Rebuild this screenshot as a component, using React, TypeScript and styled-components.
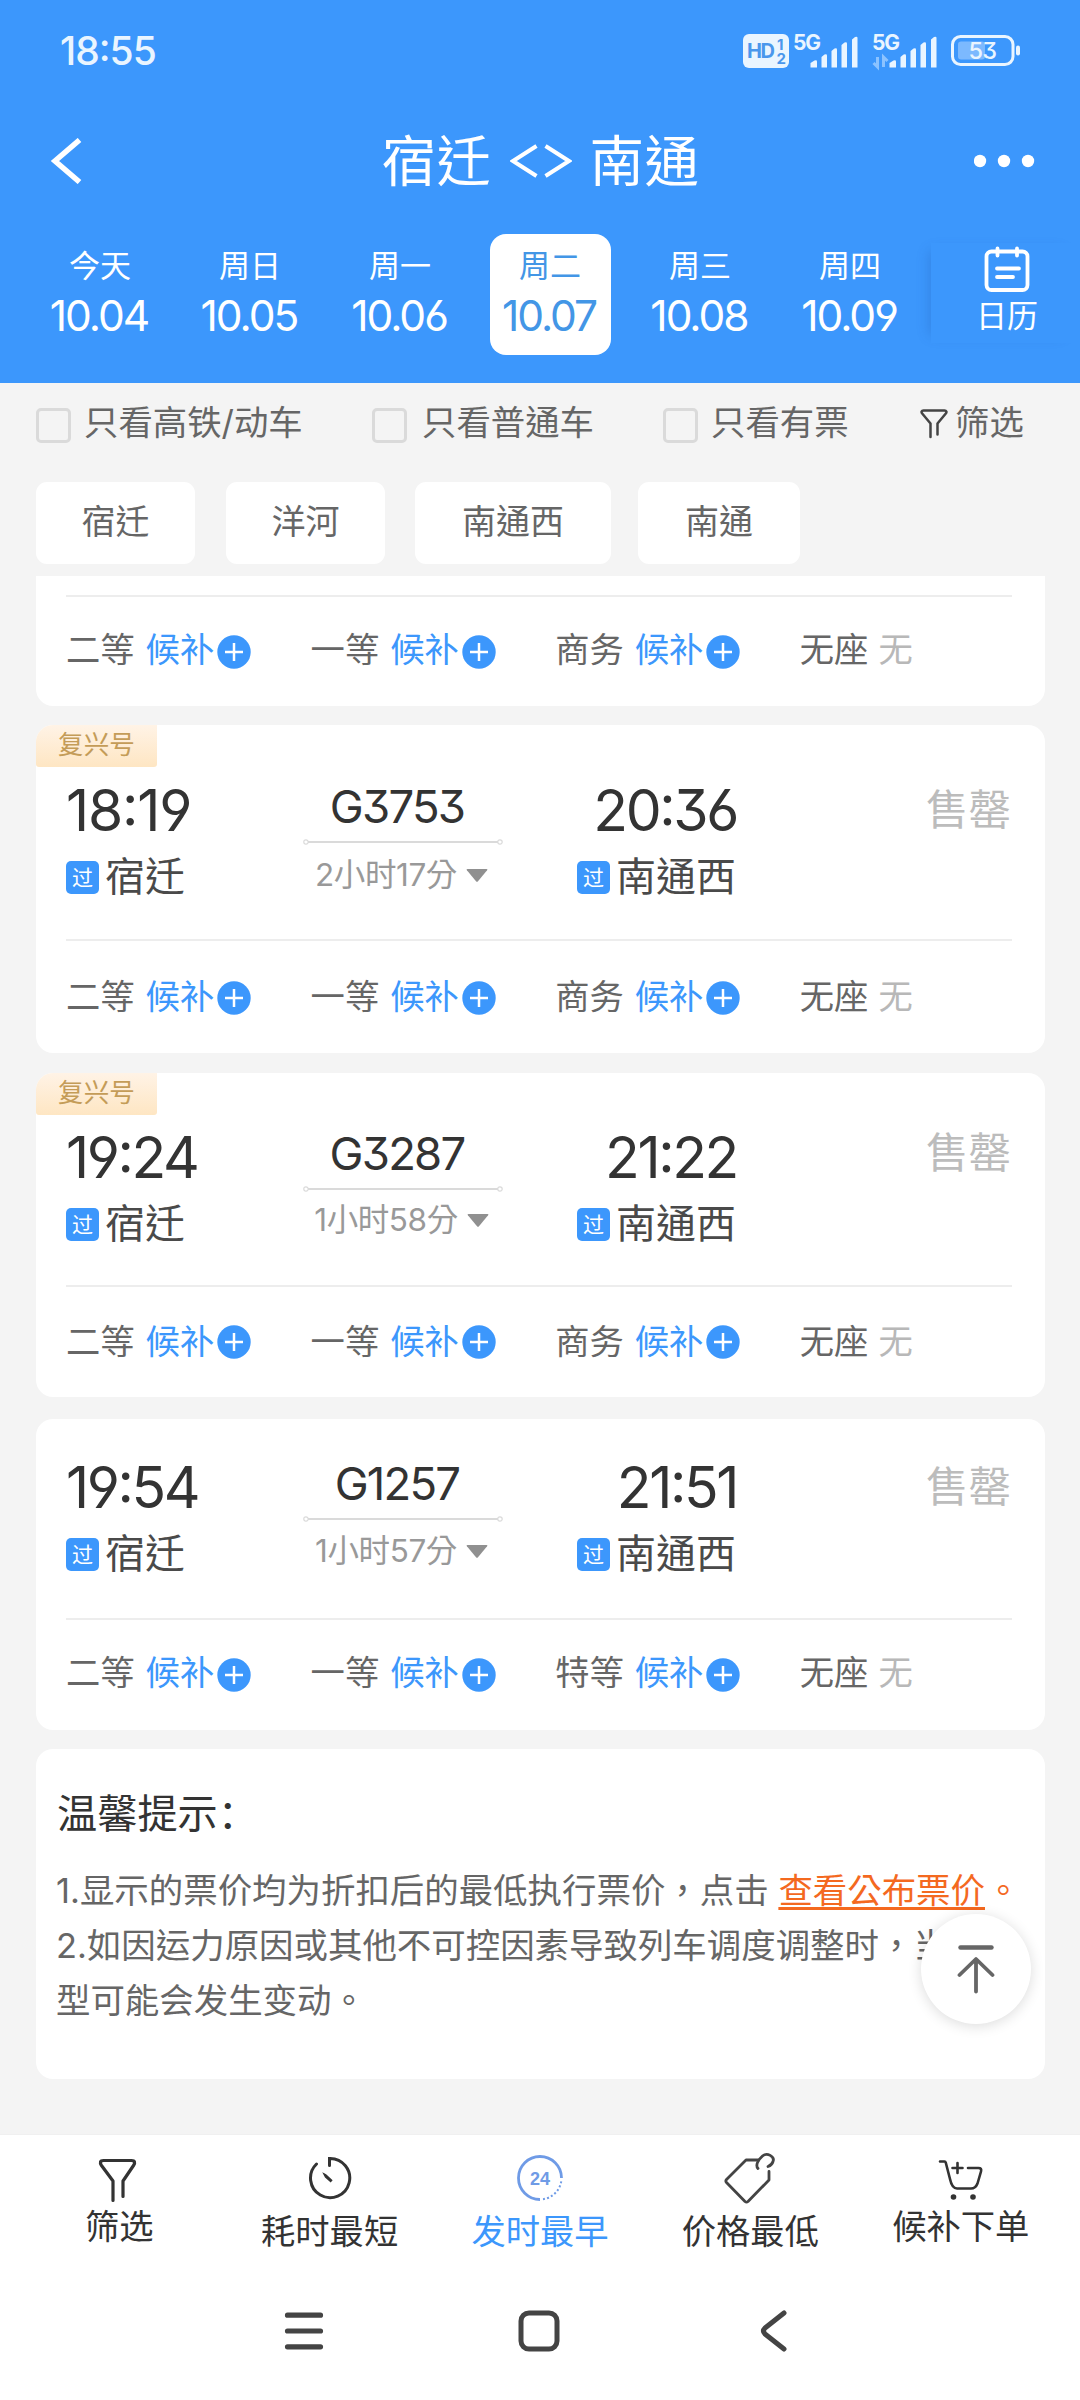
import React from 'react';
import styled, { createGlobalStyle, css } from 'styled-components';

const blue = '#3c97fc';
const ink = '#333';
const grey = '#666';

const GlobalStyle = createGlobalStyle`
  * { box-sizing: border-box; }
  body {
    margin: 0;
    background: #f4f4f4;
    font-family: Inter, 'Noto Sans CJK TC', sans-serif;
    font-feature-settings: 'cv03', 'cv04', 'cv09', 'calt';
    color: ${grey};
    white-space: nowrap;
  }
  svg { display: block; flex: none; }
`;

const Page = styled.div`
  position: relative;
  display: flex;
  flex-direction: column;
  width: 1080px;
  height: 2400px;
  overflow: hidden;
  background: #f4f4f4;
`;

/* ---------- header ---------- */

const Header = styled.header`
  height: 383px;
  background: ${blue};
  color: #fff;
`;

const StatusBar = styled.div`
  display: flex;
  align-items: center;
  justify-content: space-between;
  height: 101px;
  padding: 0 59px 0 60px;
`;

const Clock = styled.span`
  font-size: 39px;
  font-weight: 500;
  letter-spacing: -1px;
  color: #eaf5ff;
`;

const StatusIcons = styled.div`
  display: flex;
  align-items: center;
  gap: 13px;
`;

const FirstSim = styled.div`
  display: flex;
  align-items: center;
  gap: 4px;
`;

const TitleBar = styled.div`
  display: grid;
  grid-template-columns: 1fr auto 1fr;
  align-items: center;
  height: 120px;
  padding: 0 44px 0 50px;
  > :last-child { justify-self: end; }
`;

const Title = styled.h1`
  display: flex;
  align-items: center;
  gap: 18px;
  margin: 0;
  padding-right: 5px;
  font-size: 54.5px;
  font-weight: 400;
  letter-spacing: 0.5px;
  line-height: 70px;
`;

const DateStrip = styled.div`
  display: flex;
  padding: 13px 0 0 25px;
`;

const DateSlot = styled.div`
  display: flex;
  justify-content: center;
  width: 150px;
`;

const DateCell = styled.div<{ $active?: boolean }>`
  display: flex;
  flex-direction: column;
  align-items: center;
  width: 121px;
  height: 121px;
  padding-top: 12px;
  border-radius: 16px;
  ${(p) =>
    p.$active &&
    css`
      background: #fff;
      color: #4396e6;
    `}
`;

const Weekday = styled.span`
  font-size: 31px;
  line-height: 40px;
`;

const DayNumber = styled.span`
  margin: 5px 2px 0 0;
  font-size: 42.5px;
  line-height: 49px;
  letter-spacing: -2px;
`;

const CalendarButton = styled.div`
  display: flex;
  flex-direction: column;
  align-items: center;
  width: 149px;
  height: 100px;
  margin: 9px 0 0 6px;
  padding: 3px 0 0 3px;
  box-shadow: -9px 0 12px -8px rgba(30, 80, 160, 0.28);
  font-size: 31px;
  line-height: 40px;
  svg { margin-bottom: 4px; }
`;

/* ---------- filters ---------- */

const FilterRow = styled.div`
  display: grid;
  grid-template-columns: 336px 291px 257px auto;
  height: 99px;
  padding: 16px 0 0 36px;
  font-size: 34.4px;
  line-height: 47px;
`;

const FilterItem = styled.div<{ $gap: number }>`
  display: flex;
  gap: ${(p) => p.$gap}px;
`;

const Checkbox = styled.span`
  width: 35px;
  height: 35px;
  margin-top: 9px;
  border: 3px solid #dadada;
  border-radius: 5px;
`;

const FunnelSlot = styled.span`
  padding-top: 10px;
`;

const Chips = styled.div`
  display: flex;
  height: 94px;
  padding-left: 36px;
`;

const Chip = styled.div<{ $width: number; $after: number }>`
  width: ${(p) => p.$width}px;
  height: 82px;
  margin-right: ${(p) => p.$after}px;
  border-radius: 11px;
  background: #fff;
  text-align: center;
  font-size: 34px;
  line-height: 79px;
`;

/* ---------- train cards ---------- */

const List = styled.main`
  flex: 1;
  min-height: 0;
  padding: 0 35px 0 36px;
  overflow: hidden;
`;

const Card = styled.section<{ $height: number; $gap?: number; $cut?: boolean }>`
  height: ${(p) => p.$height}px;
  margin-top: ${(p) => p.$gap ?? 0}px;
  padding-top: ${(p) => (p.$cut ? 19 : 0)}px;
  border-radius: ${(p) => (p.$cut ? '0 0 17px 17px' : '17px')};
  background: #fff;
  overflow: hidden;
`;

const Ribbon = styled.div`
  width: 121px;
  height: 42px;
  border-radius: 0 0 3px 3px;
  background: linear-gradient(#fff3e6, #fee6c3);
  color: #c49c58;
  text-align: center;
  font-size: 25.6px;
  line-height: 40px;
`;

const Trip = styled.div<{ $height: number; $top: number }>`
  display: flex;
  height: ${(p) => p.$height}px;
  padding: ${(p) => p.$top}px 34px 0 30px;
`;

const Stop = styled.div<{ $end?: boolean }>`
  display: flex;
  flex-direction: column;
  align-items: ${(p) => (p.$end ? 'flex-end' : 'flex-start')};
  width: ${(p) => (p.$end ? 234 : 237)}px;
`;

const Time = styled.span<{ $tracking?: number }>`
  font-size: 57px;
  line-height: 62px;
  letter-spacing: ${(p) => p.$tracking ?? -2.4}px;
  color: ${ink};
`;

const Station = styled.div<{ $end?: boolean }>`
  display: flex;
  align-items: center;
  gap: 6px;
  margin: 12px ${(p) => (p.$end ? 1 : 0)}px 0 0;
  font-size: 40px;
  line-height: 46px;
  color: #4a4a4a;
`;

const PassBadge = styled.span`
  width: 33px;
  height: 33px;
  border-radius: 5px;
  background: ${blue};
  color: #fff;
  text-align: center;
  font-size: 21px;
  line-height: 33px;
`;

const Middle = styled.div`
  display: flex;
  flex-direction: column;
  align-items: center;
  width: 200px;
`;

const TrainNo = styled.span`
  height: 59px;
  margin-right: 12px;
  font-size: 45.5px;
  line-height: 53px;
  letter-spacing: -1.8px;
  color: ${ink};
`;

const Duration = styled.div<{ $lift: number }>`
  display: flex;
  align-items: center;
  gap: 9px;
  margin: ${(p) => 10 - p.$lift}px 3px 0 0;
  font-size: 31.5px;
  line-height: 40px;
  letter-spacing: -0.4px;
  color: #999;
`;

const SoldOut = styled.span<{ $lift: number }>`
  margin: ${(p) => -p.$lift}px 0 0 auto;
  font-size: 42.5px;
  line-height: 62px;
  color: #bcbcbc;
`;

const Divider = styled.div`
  height: 2px;
  margin: 0 33px 0 30px;
  background: #ededed;
`;

const Seats = styled.div<{ $top: number }>`
  display: grid;
  grid-template-columns: repeat(4, 244.6px);
  padding: ${(p) => p.$top}px 0 0 30px;
  font-size: 34.3px;
  line-height: 46px;
`;

const Seat = styled.div`
  display: flex;
`;

const SeatStatus = styled.span<{ $none?: boolean }>`
  margin: 0 3px 0 ${(p) => (p.$none ? 10 : 11)}px;
  color: ${(p) => (p.$none ? '#b8b8b8' : blue)};
`;

const PlusSlot = styled.span<{ $drop: number }>`
  margin-top: ${(p) => 5 + p.$drop}px;
`;

/* ---------- notice ---------- */

const NoticeTitle = styled.h2`
  margin: 0;
  padding: 41px 0 0 21px;
  font-family: Inter, 'Noto Sans CJK SC', sans-serif;
  font-size: 40.2px;
  font-weight: 400;
  line-height: 48px;
  color: ${ink};
`;

const NoticeText = styled.p`
  margin: 25px 0 0 20px;
  font-size: 34.45px;
  line-height: 55px;
`;

const FareLink = styled.a`
  margin-right: 1px;
  color: #f4691f;
  text-decoration: underline;
  text-decoration-thickness: 3px;
  text-underline-offset: 4px;
`;

const LinkStop = styled.span`
  color: #f4691f;
`;

const TopButton = styled.button`
  position: absolute;
  left: 921px;
  top: 1914px;
  display: flex;
  align-items: center;
  justify-content: center;
  width: 110px;
  height: 110px;
  padding: 0;
  border: 0;
  border-radius: 50%;
  background: #fff;
  box-shadow: 0 2px 14px rgba(0, 0, 0, 0.14);
`;

/* ---------- bottom bars ---------- */

const TabBar = styled.footer`
  display: flex;
  height: 128px;
  padding-left: 14px;
  border-top: 1px solid #f0f0f0;
  background: #fff;
`;

const Tab = styled.div<{ $active?: boolean; $drop?: number }>`
  display: flex;
  flex-direction: column;
  align-items: center;
  width: 210.4px;
  padding-top: 13px;
  font-size: 34.3px;
  line-height: 44px;
  color: ${(p) => (p.$active ? blue : ink)};
  svg { margin-bottom: ${(p) => -4 + (p.$drop ?? 0)}px; }
`;

const SystemNav = styled.nav`
  display: flex;
  align-items: center;
  height: 138px;
  padding-left: 284px;
  background: #fff;
  svg:nth-child(2) { margin-left: 194px; }
  svg:nth-child(3) { margin-left: 198px; }
`;

/* ---------- icons ---------- */

const HdIcon = () => (
  <svg width="46" height="34" viewBox="0 0 46 34">
    <rect width="46" height="34" rx="6" fill="#eaf5ff" />
    <g fill="#4a97ec" fontFamily="Inter" fontWeight="700">
      <text x="4" y="24" fontSize="20" textLength="28">HD</text>
      <text x="34" y="16" fontSize="15">1</text>
      <text x="33.500" y="30" fontSize="15">2</text>
    </g>
  </svg>
);

const SignalIcon = ({ data }: { data?: boolean }) => (
  <svg width="66" height="50" viewBox="0 -7 66 50">
    <text x="0" y="16.500" fontSize="21" fontFamily="Inter" fontWeight="700" fill="#eaf5ff" textLength="28">5G</text>
    {data && (
      <g stroke="#8cc3ff" strokeWidth="3" fill="none">
        <path d="M5.500 24v10l-4-4M11.500 34v-10l4 4" />
      </g>
    )}
    <g fill="#eaf5ff">
      <path d="M17.500 34.500v-4.500l4-2.500q2.500-1 2.500 1v6z" />
      <path d="M28.500 34.500V24l3-2.500q2.500-1 2.500 1v12z" />
      <path d="M38.500 34.500V18l3-2.500q2.500-1 2.500 1v18z" />
      <path d="M48.500 34.500V12l3-2.500q2.500-1 2.500 1v24z" />
      <path d="M59 34.500V6.500l3-2.500q2.500-1 2.500 1v29.500z" />
    </g>
  </svg>
);

const BatteryIcon = () => (
  <svg width="70" height="32" viewBox="0 0 70 32">
    <rect x="1.500" y="1.500" width="60.500" height="28" rx="8" fill="none" stroke="#eaf5ff" strokeWidth="3" />
    <rect x="7" y="6.500" width="27" height="18" rx="3" fill="#7cb9fe" />
    <rect x="65" y="10.500" width="4" height="10" rx="2" fill="#eaf5ff" />
    <text x="31.500" y="24" fontSize="23.500" fontFamily="Inter" fontWeight="500" fill="#eaf5ff" textAnchor="middle" letterSpacing="-0.600">53</text>
  </svg>
);

const BackIcon = () => (
  <svg width="34" height="46" viewBox="0 0 34 46" fill="none" stroke="#fff" strokeWidth="5.500">
    <path d="M29.500 2L5 23l24.500 21" />
  </svg>
);

const RouteIcon = () => (
  <svg width="62" height="34" viewBox="0 0 62 34" fill="none" stroke="#fff" strokeWidth="4">
    <path d="M26.500 2L3 17l23.500 15M35.500 2L59 17L35.500 32" />
  </svg>
);

const MoreIcon = () => (
  <svg width="62" height="14" viewBox="0 0 62 14" fill="#fff">
    <circle cx="6" cy="7" r="6.200" />
    <circle cx="30" cy="7" r="6.200" />
    <circle cx="54" cy="7" r="6.200" />
  </svg>
);

const CalendarIcon = () => (
  <svg width="46" height="46" viewBox="0 0 46 46" fill="none" stroke="#fff" strokeWidth="3.800" strokeLinecap="round">
    <rect x="2.500" y="5.500" width="41" height="38.500" rx="5" />
    <path d="M13.500 2.500v7M33 2.500v7M13 22.500h22M13 31h16" />
  </svg>
);

const FunnelSmall = () => (
  <svg width="28" height="30" viewBox="0 0 28 30" fill="none" stroke="#444" strokeWidth="2.500" strokeLinecap="round" strokeLinejoin="round">
    <path d="M10.500 28V14.500L2.200 4.500C1 3 1.500 1.500 3.500 1.500h21c2 0 2.500 1.500 1.300 3L17.500 14.500V25.500" />
  </svg>
);

const RouteLine = () => (
  <svg width="200" height="6" viewBox="0 0 200 6" fill="none" stroke="#dadada">
    <path d="M5 3h190" strokeWidth="2" />
    <circle cx="3" cy="3" r="2.200" strokeWidth="1.200" />
    <circle cx="197" cy="3" r="2.200" strokeWidth="1.200" />
  </svg>
);

const Caret = () => (
  <svg width="22" height="13" viewBox="0 0 22 13" fill="#909090">
    <path d="M1.500 0h19q1.500 0 .6 1.300L12 12.200q-1 1-2 0L.9 1.300Q0 0 1.500 0z" />
  </svg>
);

const PlusIcon = () => (
  <svg width="34" height="34" viewBox="0 0 34 34">
    <circle cx="17" cy="17" r="16.700" fill={blue} />
    <path d="M8 17h18M17 8v18" stroke="#fff" strokeWidth="2.500" />
  </svg>
);

const TopIcon = () => (
  <svg width="38" height="50" viewBox="0 0 38 50" fill="none" stroke="#666" strokeWidth="3.800" strokeLinecap="round" strokeLinejoin="round">
    <path d="M3.500 3.500h31" strokeWidth="4.400" />
    <path d="M19 47.500V15.500M2.500 31L19 15l16.500 16" />
  </svg>
);

const FunnelIcon = () => (
  <svg width="42" height="61" viewBox="0 -10.500 42 61" fill="none" stroke={ink} strokeWidth="3.200" strokeLinecap="round" strokeLinejoin="round">
    <path d="M15 42V22.500L3.500 7C1.500 4 2.200 2 5.500 2h28c3.300 0 4 2 2 5L25 22.500V38" />
  </svg>
);

const TimerIcon = () => (
  <svg width="44" height="61" viewBox="0 -8 44 61" fill="none" stroke={ink} strokeWidth="3" strokeLinecap="round">
    <path d="M21.500 9.500V2.500A19.600 19.600 0 1 1 8.500 8" />
    <path d="M16 18l2 1 5.600 5.300-1 1.200-5-4.500z" fill={ink} strokeWidth="1.500" />
  </svg>
);

const Hour24Icon = () => (
  <svg width="46" height="61" viewBox="0 -7 46 61" fill="none" stroke="#6f9be6" strokeWidth="2.800">
    <path d="M44.500 23A21.500 21.500 0 1 0 23 44.500" />
    <path d="M26 44.200A21.500 21.500 0 0 0 44.300 26" strokeWidth="2" strokeDasharray="2 2.200" />
    <text x="23" y="30" fontSize="18" fontWeight="700" fontFamily="Liberation Sans" fill="#6f9be6" stroke="none" textAnchor="middle">24</text>
  </svg>
);

const PriceTagIcon = () => (
  <svg width="52" height="61" viewBox="0 -4 52 61" fill="none" stroke="#444" strokeWidth="2.800" strokeLinecap="round" strokeLinejoin="round">
    <path d="M45 19.500V28L24 49.500q-1.500 1.300-3 0L2.500 30.500q-1.300-1.500 0-3L22 8L34.500 8" />
    <path d="M34 16.500C31 13 34.500 7.500 38.500 4C43 0 51 4.500 49 9.500Q48 13 44 14.500" />
  </svg>
);

const CartIcon = () => (
  <svg width="46" height="61" viewBox="0 -11 46 61" fill="none" stroke={ink} strokeWidth="2.600" strokeLinecap="round" strokeLinejoin="round">
    <path d="M2 2.500h4.500q1 0 1.300 1.200L12 20q2 9.500 7 9.500H33q4.500 0 6.500-5L43 12.500q1-3.500-2.500-3.500H30" />
    <path d="M19.500 4v10M14.500 9h10" />
    <circle cx="15.500" cy="38" r="2.800" fill={ink} stroke="none" />
    <circle cx="35" cy="38" r="2.800" fill={ink} stroke="none" />
  </svg>
);

const MenuIcon = () => (
  <svg width="40" height="40" viewBox="0 0 40 40" stroke="#444" strokeWidth="5.200" strokeLinecap="round">
    <path d="M3.500 4.200h33M3.500 20h33M3.500 35.800h33" />
  </svg>
);

const HomeIcon = () => (
  <svg width="42" height="42" viewBox="0 0 42 42" fill="none" stroke="#444" strokeWidth="5">
    <rect x="3" y="3" width="36" height="36" rx="8" />
  </svg>
);

const NavBackIcon = () => (
  <svg width="30" height="42" viewBox="0 0 30 42" fill="none" stroke="#444" strokeWidth="5" strokeLinecap="round" strokeLinejoin="round">
    <path d="M26 3L7 18q-3 3 0 6l19 15" />
  </svg>
);

/* ---------- data ---------- */

const dates = [
  ['今天', '10.04'],
  ['周日', '10.05'],
  ['周一', '10.06'],
  ['周二', '10.07'],
  ['周三', '10.08'],
  ['周四', '10.09'],
];

const chips = [
  { name: '宿迁', width: 159, after: 31 },
  { name: '洋河', width: 159, after: 30 },
  { name: '南通西', width: 196, after: 27 },
  { name: '南通', width: 162, after: 0 },
];

interface Train {
  no: string;
  depart: string;
  arrive: string;
  duration: string;
  business: string;
  fuxing: boolean;
  height: number;
  gap: number;
  tripHeight: number;
  top: number;
  lift: number;
  soldLift: number;
  seatTop: number;
  plusDrop: number;
  tracking?: number;
}

const trains: Train[] = [
  { no: 'G3753', depart: '18:19', arrive: '20:36', duration: '2小时17分', business: '商务', fuxing: true, height: 328, gap: 19, tripHeight: 172, top: 13, lift: 0, soldLift: 1, seatTop: 33, plusDrop: 2, tracking: -1.2 },
  { no: 'G3287', depart: '19:24', arrive: '21:22', duration: '1小时58分', business: '商务', fuxing: true, height: 324, gap: 20, tripHeight: 170, top: 12, lift: 2, soldLift: 5, seatTop: 32, plusDrop: 1 },
  { no: 'G1257', depart: '19:54', arrive: '21:51', duration: '1小时57分', business: '特等', fuxing: false, height: 311, gap: 22, tripHeight: 199, top: 38, lift: 1, soldLift: 1, seatTop: 30, plusDrop: 3 },
];

const SeatRow = ({ third, top, drop }: { third: string; top: number; drop: number }) => (
  <Seats $top={top}>
    {['二等', '一等', third].map((name) => (
      <Seat key={name}>
        <span>{name}</span>
        <SeatStatus>候补</SeatStatus>
        <PlusSlot $drop={drop}>
          <PlusIcon />
        </PlusSlot>
      </Seat>
    ))}
    <Seat>
      <span>无座</span>
      <SeatStatus $none>无</SeatStatus>
    </Seat>
  </Seats>
);

const TrainCard = ({ train: t }: { train: Train }) => (
  <Card $height={t.height} $gap={t.gap}>
    {t.fuxing && <Ribbon>复兴号</Ribbon>}
    <Trip $height={t.tripHeight} $top={t.top}>
      <Stop>
        <Time $tracking={t.tracking}>{t.depart}</Time>
        <Station>
          <PassBadge>过</PassBadge>
          <span>宿迁</span>
        </Station>
      </Stop>
      <Middle>
        <TrainNo>{t.no}</TrainNo>
        <RouteLine />
        <Duration $lift={t.lift}>
          <span>{t.duration}</span>
          <Caret />
        </Duration>
      </Middle>
      <Stop $end>
        <Time>{t.arrive}</Time>
        <Station $end>
          <PassBadge>过</PassBadge>
          <span>南通西</span>
        </Station>
      </Stop>
      <SoldOut $lift={t.soldLift}>售罄</SoldOut>
    </Trip>
    <Divider />
    <SeatRow third={t.business} top={t.seatTop} drop={t.plusDrop} />
  </Card>
);

export default function App() {
  return (
    <Page>
      <GlobalStyle />
      <Header>
        <StatusBar>
          <Clock>18:55</Clock>
          <StatusIcons>
            <FirstSim>
              <HdIcon />
              <SignalIcon />
            </FirstSim>
            <SignalIcon data />
            <BatteryIcon />
          </StatusIcons>
        </StatusBar>
        <TitleBar>
          <BackIcon />
          <Title>
            <span>宿迁</span>
            <RouteIcon />
            <span>南通</span>
          </Title>
          <MoreIcon />
        </TitleBar>
        <DateStrip>
          {dates.map(([day, date]) => (
            <DateSlot key={date}>
              <DateCell $active={date === '10.07'}>
                <Weekday>{day}</Weekday>
                <DayNumber>{date}</DayNumber>
              </DateCell>
            </DateSlot>
          ))}
          <CalendarButton>
            <CalendarIcon />
            日历
          </CalendarButton>
        </DateStrip>
      </Header>

      <FilterRow>
        <FilterItem $gap={13}>
          <Checkbox />
          只看高铁/动车
        </FilterItem>
        <FilterItem $gap={15}>
          <Checkbox />
          只看普通车
        </FilterItem>
        <FilterItem $gap={13}>
          <Checkbox />
          只看有票
        </FilterItem>
        <FilterItem $gap={7}>
          <FunnelSlot>
            <FunnelSmall />
          </FunnelSlot>
          筛选
        </FilterItem>
      </FilterRow>

      <Chips>
        {chips.map((c) => (
          <Chip key={c.name} $width={c.width} $after={c.after}>
            {c.name}
          </Chip>
        ))}
      </Chips>

      <List>
        <Card $height={130} $cut>
          <Divider />
          <SeatRow third="商务" top={30} drop={3} />
        </Card>
        {trains.map((t) => (
          <TrainCard key={t.no} train={t} />
        ))}
        <Card $height={330} $gap={19}>
          <NoticeTitle>温馨提示：</NoticeTitle>
          <NoticeText>
            1.显示的票价均为折扣后的最低执行票价，点击 <FareLink>查看公布票价</FareLink>
            <LinkStop>。</LinkStop>
            <br />
            2.如因运力原因或其他不可控因素导致列车调度调整时，当前车
            <br />
            型可能会发生变动。
          </NoticeText>
        </Card>
      </List>

      <TopButton>
        <TopIcon />
      </TopButton>

      <TabBar>
        <Tab>
          <FunnelIcon />
          筛选
        </Tab>
        <Tab $drop={5}>
          <TimerIcon />
          耗时最短
        </Tab>
        <Tab $active $drop={5}>
          <Hour24Icon />
          发时最早
        </Tab>
        <Tab $drop={5}>
          <PriceTagIcon />
          价格最低
        </Tab>
        <Tab>
          <CartIcon />
          候补下单
        </Tab>
      </TabBar>
      <SystemNav>
        <MenuIcon />
        <HomeIcon />
        <NavBackIcon />
      </SystemNav>
    </Page>
  );
}
